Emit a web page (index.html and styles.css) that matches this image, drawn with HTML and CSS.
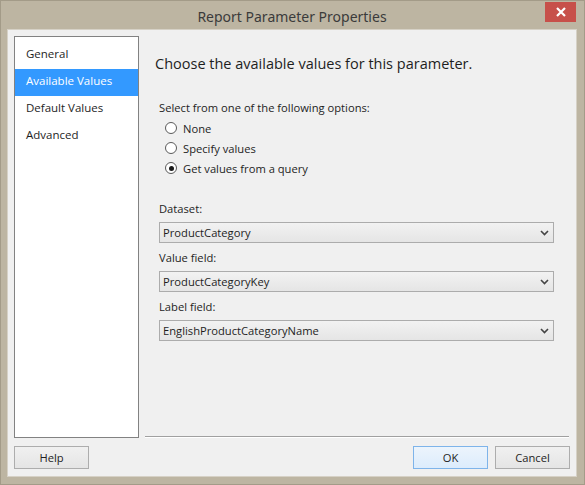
FILE: index.html
```html
<!DOCTYPE html>
<html>
<head>
<meta charset="utf-8">
<link rel="stylesheet" href="styles.css">
</head>
<body>
<div class="window">
  <div class="titlebar">
    <div class="title">Report Parameter Properties</div>
    <div class="close"><svg width="12" height="10" viewBox="0 0 12 10"><path d="M2 1 L10 9 M10 1 L2 9" stroke="#fff" stroke-width="2.2" fill="none"/></svg></div>
  </div>
  <div class="client">
    <div class="main">
      <div class="nav">
        <div class="nav-item">General</div>
        <div class="nav-item selected">Available Values</div>
        <div class="nav-item">Default Values</div>
        <div class="nav-item">Advanced</div>
      </div>
      <div class="panel">
        <div class="heading">Choose the available values for this parameter.</div>
        <div class="label">Select from one of the following options:</div>
        <div class="radios">
          <div class="radio"><span class="dot"></span>None</div>
          <div class="radio"><span class="dot"></span>Specify values</div>
          <div class="radio"><span class="dot checked"></span>Get values from a query</div>
        </div>
        <div class="fields">
          <div class="field-label">Dataset:</div>
          <div class="combo"><span>ProductCategory</span><span class="arrow"><svg width="9" height="6" viewBox="0 0 9 6"><path d="M1 1 L4.5 4.5 L8 1" stroke="#444" stroke-width="1.6" fill="none"/></svg></span></div>
          <div class="field-label">Value field:</div>
          <div class="combo"><span>ProductCategoryKey</span><span class="arrow"><svg width="9" height="6" viewBox="0 0 9 6"><path d="M1 1 L4.5 4.5 L8 1" stroke="#444" stroke-width="1.6" fill="none"/></svg></span></div>
          <div class="field-label">Label field:</div>
          <div class="combo"><span>EnglishProductCategoryName</span><span class="arrow"><svg width="9" height="6" viewBox="0 0 9 6"><path d="M1 1 L4.5 4.5 L8 1" stroke="#444" stroke-width="1.6" fill="none"/></svg></span></div>
        </div>
        <div class="spacer"></div>
        <div class="separator"></div>
      </div>
    </div>
    <div class="buttons">
      <div class="btn">Help</div>
      <div class="grow"></div>
      <div class="btn default">OK</div>
      <div class="btn">Cancel</div>
    </div>
  </div>
</div>
</body>
</html>
```
FILE: styles.css
```css
html, body { margin: 0; padding: 0; }
body {
  width: 585px; height: 485px; overflow: hidden;
  font-family: "Open Sans", "Noto Sans", sans-serif;
  font-size: 11.2px; color: #1e1e1e;
}
.window {
  width: 585px; height: 485px; box-sizing: border-box;
  background: #bdb5a2;
  border: 1px solid #a39b88;
  padding: 0 7px 7px 6px;
  display: flex; flex-direction: column;
}
.titlebar {
  height: 30px; position: relative;
  display: flex; align-items: center; justify-content: center;
}
.title {
  font-family: "Noto Sans", "Open Sans", sans-serif;
  font-size: 14px; color: #3b3b3b; margin-top: 3px;
}
.close {
  position: absolute; right: 1px; top: 1px;
  width: 31px; height: 20px; background: #c7504a;
  display: flex; align-items: center; justify-content: center;
}
.client {
  flex: 1; background: #f0f0f0;
  border: 1px solid #d6d1c6;
  display: flex; flex-direction: column;
  padding: 6px 6px 7px 6px;
}
.main { flex: 1; display: flex; }
.nav {
  width: 125px; background: #fff;
  border: 1px solid #828282;
  padding-top: 5px;
  box-sizing: border-box;
  height: 402px;
}
.nav-item { height: 27px; line-height: 23px; padding-left: 11px; font-size: 11.5px; }
.nav-item.selected { background: #3399ff; color: #fff; }
.panel { flex: 1; display: flex; flex-direction: column; padding-left: 6px; }
.heading {
  font-size: 14.5px; color: #1e1e1e; margin: 18px 0 0 10px; height: 22px;
}
.label { margin: 24px 0 0 14px; height: 16px; }
.radios { margin: 4px 0 0 20px; display: flex; flex-direction: column; gap: 4px; }
.radio { height: 16px; display: flex; align-items: center; gap: 6px; }
.dot {
  width: 12px; height: 12px; border: 1px solid #5a5a5a; border-radius: 50%;
  background: #fff; box-sizing: border-box; position: relative;
}
.dot.checked::after {
  content: ""; position: absolute; left: 2.5px; top: 2.5px;
  width: 5px; height: 5px; border-radius: 50%; background: #1a1a1a;
}
.fields { margin: 25px 0 0 14px; width: 395px; }
.field-label { height: 16px; margin-bottom: 5px; }
.combo {
  height: 21px; box-sizing: border-box;
  border: 1px solid #acacac;
  background: linear-gradient(#f2f2f2, #e5e5e5);
  display: flex; align-items: center; justify-content: space-between;
  padding: 0 4px 0 3px; margin-bottom: 7px;
}
.arrow { display: flex; align-items: center; }
.spacer { flex: 1; }
.separator { height: 1px; background: #a0a0a0; border-bottom: 1px solid #fff; width: 424px; }
.buttons { display: flex; height: 23px; margin-top: 8px; gap: 7px; }
.grow { flex: 1; }
.btn {
  width: 75px; box-sizing: border-box; height: 23px;
  border: 1px solid #adadad; background: linear-gradient(#f0f0f0, #e5e5e5);
  display: flex; align-items: center; justify-content: center;
}
.btn.default { background: linear-gradient(#ecf4fc, #dcecfc); border: 1px solid #7eb4ea; }
```
